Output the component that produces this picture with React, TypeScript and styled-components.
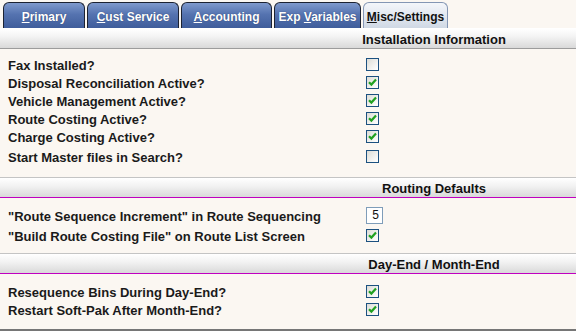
import React from "react";
import styled, { createGlobalStyle } from "styled-components";

const GlobalStyle = createGlobalStyle`
  html, body {
    margin: 0;
    padding: 0;
    background: #fbf7f2;
  }
  body {
    font-family: "Liberation Sans", Arial, sans-serif;
  }
`;

const Page = styled.div`
  width: 576px;
  height: 331px;
  box-sizing: border-box;
  background: #fbf7f2;
  border-bottom: 2px solid #767676;
  overflow: hidden;
`;

const TabStrip = styled.div`
  display: flex;
  align-items: flex-end;
  gap: 2px;
  height: 28px;
  padding-left: 3px;
  box-sizing: border-box;
  background: #fbf7f2;
`;

const Tab = styled.div<{ $width: number; $active?: boolean }>`
  display: flex;
  align-items: center;
  justify-content: center;
  width: ${(p) => p.$width}px;
  height: 26px;
  box-sizing: border-box;
  border: 1px solid ${(p) => (p.$active ? "#8496b4" : "#1c2232")};
  border-bottom: none;
  border-radius: 6px 6px 0 0;
  background: ${(p) =>
    p.$active
      ? "linear-gradient(#f4f6fa, #dfe5ee 60%, #cfd8e4)"
      : "linear-gradient(#7f9acd, #5573b0 45%, #3f5d9b)"};
  color: ${(p) => (p.$active ? "#111" : "#fff")};
  font-size: 12px;
  font-weight: bold;
  padding-top: 2px;
  text-shadow: ${(p) => (p.$active ? "none" : "0 0 1px rgba(20,30,60,0.6)")};

  u {
    text-decoration: underline;
    text-underline-offset: 1px;
  }
`;

const Header = styled.div<{ $accent?: boolean; $top?: boolean }>`
  height: 21px;
  box-sizing: border-box;
  border-top: 1px solid ${(p) => (p.$top ? "#ffffff" : "#c4c4c4")};
  border-bottom: 1px solid ${(p) => (p.$accent ? "#c000c0" : "#9c9c9c")};
  background: linear-gradient(#ffffff, #f3f3f3 40%, #d9d9d9);
  display: flex;
  align-items: center;
  justify-content: center;
  padding-left: 292px;
  padding-top: 1px;
  font-size: 13px;
  font-weight: bold;
  color: #111;
`;

const Body = styled.div<{ $pt: number; $pb: number }>`
  display: flex;
  flex-direction: column;
  padding: ${(p) => p.$pt}px 0 ${(p) => p.$pb}px 8px;
`;

const Row = styled.div<{ $h?: number; $mt?: number }>`
  display: grid;
  grid-template-columns: 358px 1fr;
  align-items: center;
  height: ${(p) => p.$h ?? 18}px;
  margin-top: ${(p) => p.$mt ?? 0}px;
`;

const Label = styled.span`
  font-size: 13px;
  font-weight: bold;
  color: #1a1a1a;
  padding-top: 2px;
  white-space: nowrap;
`;

const Box = styled.span`
  display: inline-flex;
  align-items: center;
  justify-content: center;
  width: 13px;
  height: 13px;
  box-sizing: border-box;
  border: 1px solid #1c5180;
  background: linear-gradient(135deg, #dcdcd6, #f6f6f4 70%, #ffffff);
`;

const NumberBox = styled.span`
  display: inline-flex;
  align-items: center;
  justify-content: flex-end;
  width: 17px;
  height: 17px;
  box-sizing: border-box;
  border: 1px solid #7f9db9;
  background: #fff;
  padding-right: 3px;
  font-size: 12px;
  color: #111;
`;

function Check({ on }: { on: boolean }) {
  return (
    <Box>
      {on && (
        <svg width="9" height="9" viewBox="0 0 9 9">
          <path d="M1 4.2 L3.4 6.6 L8 1.6" fill="none" stroke="#21a121" strokeWidth="2.2" />
        </svg>
      )}
    </Box>
  );
}

const install: [string, boolean][] = [
  ["Fax Installed?", false],
  ["Disposal Reconciliation Active?", true],
  ["Vehicle Management Active?", true],
  ["Route Costing Active?", true],
  ["Charge Costing Active?", true],
];

export default function App() {
  return (
    <Page>
      <GlobalStyle />
      <TabStrip>
        <Tab $width={82}>
          <span><u>P</u>rimary</span>
        </Tab>
        <Tab $width={92}>
          <span><u>C</u>ust Service</span>
        </Tab>
        <Tab $width={91}>
          <span><u>A</u>ccounting</span>
        </Tab>
        <Tab $width={87}>
          <span>Exp <u>V</u>ariables</span>
        </Tab>
        <Tab $width={85} $active>
          <span><u>M</u>isc/Settings</span>
        </Tab>
      </TabStrip>

      <Header $top>Installation Information</Header>
      <Body $pt={6} $pb={12}>
        {install.map(([label, on]) => (
          <Row key={label}>
            <Label>{label}</Label>
            <Check on={on} />
          </Row>
        ))}
        <Row $mt={2}>
          <Label>Start Master files in Search?</Label>
          <Check on={false} />
        </Row>
      </Body>

      <Header $accent>Routing Defaults</Header>
      <Body $pt={6} $pb={9}>
        <Row $h={22}>
          <Label>"Route Sequence Increment" in Route Sequencing</Label>
          <NumberBox>5</NumberBox>
        </Row>
        <Row>
          <Label>"Build Route Costing File" on Route List Screen</Label>
          <Check on />
        </Row>
      </Body>

      <Header $accent>Day-End / Month-End</Header>
      <Body $pt={8} $pb={10}>
        <Row>
          <Label>Resequence Bins During Day-End?</Label>
          <Check on />
        </Row>
        <Row>
          <Label>Restart Soft-Pak After Month-End?</Label>
          <Check on />
        </Row>
      </Body>
    </Page>
  );
}
